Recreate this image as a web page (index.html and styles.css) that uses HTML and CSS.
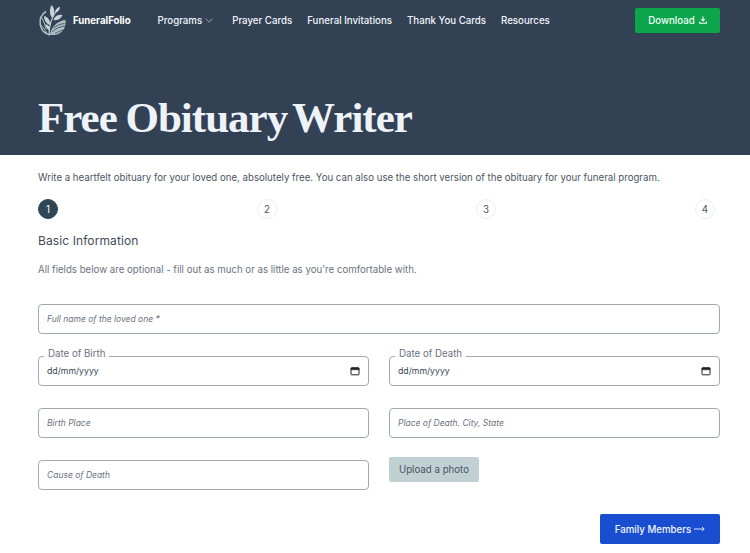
FILE: index.html
```html
<!DOCTYPE html>
<html lang="en">
<head>
<meta charset="utf-8">
<title>Free Obituary Writer</title>
<link rel="stylesheet" href="styles.css">
</head>
<body>
<header class="hero">
  <nav class="nav">
    <a class="brand">
      <svg class="logo" viewBox="0 0 28 32" width="28" height="32" aria-hidden="true">
        <path d="M8 7.500A13 13 0 0 0 12 31" fill="none" stroke="#aebfc4" stroke-width="1.500"/>
        <path d="M3 13c3 4 4 8 5 12M1.800 20c2 2 5 5 7 9" fill="none" stroke="#aebfc4" stroke-width="1"/>
        <path d="M11 31c0-9 2-17 8-25" fill="none" stroke="#c6d3d6" stroke-width="1.200"/>
        <path d="M14.500 14C11 11 11.500 5 13.500 1c3 3 4 8 1 13zM17 9c0-3 1.500-5 5-6.500 0 3-1.500 5.500-5 6.500zM12 21c-3-1-6-4-6-9 4 1 6.500 4 6 9zM15.500 16c1-3.500 4-6 9-5-1.500 3.500-4.500 6-9 5zM12 27c-2-1-4.500-3.500-4.500-7 3 1 5 3.500 4.500 7z" fill="#c6d3d6"/>
        <path d="M12 31c1-8 7-14 15.500-15 1 9-5 16-15.500 15z" fill="#aebfc4"/>
        <path d="M14 28c3-3 7-5 13-6M15.500 24c3-2 6-4 11-4.500M17 29.500c3-1.500 5.500-3 9-3.500" fill="none" stroke="#334155" stroke-width=".8"/>
      </svg>
      <span>FuneralFolio</span>
    </a>
    <ul class="links">
      <li class="programs">Programs
        <svg class="chev" viewBox="0 0 10 6" width="8" height="5" aria-hidden="true"><path d="M.7.7 5 5 9.300.7" fill="none" stroke="#9fb0c0" stroke-width="1.100"/></svg>
      </li>
      <li>Prayer Cards</li>
      <li>Funeral Invitations</li>
      <li>Thank You Cards</li>
      <li>Resources</li>
    </ul>
    <a class="download">Download
      <svg viewBox="0 0 10 10" width="8" height="8" aria-hidden="true"><path d="M5 .5v5.600M2.800 4 5 6.200 7.200 4M.8 7v2h8.400V7" fill="none" stroke="#f0fdf4" stroke-width="1.400"/></svg>
    </a>
  </nav>
  <h1><span class="first-word">Free</span> Obituary Writer</h1>
</header>
<main class="content">
  <p class="intro">Write a heartfelt obituary for your loved one, absolutely free. You can also use the short version of the obituary for your funeral program.</p>
  <ol class="steps">
    <li class="step active">1</li>
    <li class="step">2</li>
    <li class="step">3</li>
    <li class="step">4</li>
  </ol>
  <h2>Basic Information</h2>
  <p class="note">All fields below are optional - fill out as much or as little as you're comfortable with.</p>
  <form class="form">
    <input class="input wide" type="text" placeholder="Full name of the loved one *">
    <div class="date">
      <span class="float">Date of Birth</span>
      <span>dd/mm/yyyy</span>
      <svg viewBox="0 0 10 10" width="10" height="10" aria-hidden="true"><path d="M1.500 1.800h7a.5.5 0 0 1 .5.5v6a.5.5 0 0 1-.5.5h-7a.5.5 0 0 1-.5-.5v-6a.5.5 0 0 1 .5-.5z" fill="none" stroke="#222" stroke-width="1"/><path d="M1 2h8v1.800H1zM3 .8v1M7 .8v1" fill="#222" stroke="#222" stroke-width=".5"/></svg>
    </div>
    <div class="date">
      <span class="float">Date of Death</span>
      <span>dd/mm/yyyy</span>
      <svg viewBox="0 0 10 10" width="10" height="10" aria-hidden="true"><path d="M1.500 1.800h7a.5.5 0 0 1 .5.5v6a.5.5 0 0 1-.5.5h-7a.5.5 0 0 1-.5-.5v-6a.5.5 0 0 1 .5-.5z" fill="none" stroke="#222" stroke-width="1"/><path d="M1 2h8v1.800H1zM3 .8v1M7 .8v1" fill="#222" stroke="#222" stroke-width=".5"/></svg>
    </div>
    <input class="input" type="text" placeholder="Birth Place">
    <input class="input" type="text" placeholder="Place of Death. City, State">
    <input class="input" type="text" placeholder="Cause of Death">
    <div><button class="upload" type="button">Upload a photo</button></div>
  </form>
  <div class="actions">
    <button class="next" type="button">Family Members
      <svg viewBox="0 0 11 6" width="11" height="6" aria-hidden="true"><path d="M0 3h10M8 1l2.200 2L8 5" fill="none" stroke="#f1f5ff" stroke-width=".9"/></svg>
    </button>
  </div>
</main>
</body>
</html>
```
FILE: styles.css
```css
* { box-sizing: border-box; }
html, body { margin: 0; padding: 0; }
body {
  font-family: Inter, "Liberation Sans", sans-serif;
  background: #fff;
  color: #4b5563;
  overflow: hidden;
}
.hero { background: #334155; height: 155px; padding: 0 30px 0 38px; }
.nav { display: flex; align-items: center; height: 40px; }
.brand {
  display: flex; align-items: center; gap: 7px;
  color: #fff; font-size: 9.670px; font-weight: 700;
  width: 119.500px;
}
.logo { flex: none; }
.links {
  display: flex; align-items: center; gap: 15px;
  list-style: none; margin: 0; padding: 0;
  color: #f1f5f9; font-size: 9.700px; font-weight: 500;
}
.programs { display: flex; align-items: center; gap: 3px; margin-right: 4px; }
.chev { margin-top: 1px; }
.download {
  margin-left: auto;
  display: flex; align-items: center; justify-content: center; gap: 4px;
  width: 85px; height: 25px;
  background: #0ca54c; color: #f0fdf4;
  border-radius: 2px; font-size: 9.700px; font-weight: 500;
}
h1 {
  margin: 53px 0 0;
  color: #eef3f9;
  font-family: "Liberation Serif", serif;
  font-size: 43px; line-height: 50px; font-weight: 700;
  letter-spacing: -1px; word-spacing: -4px;
}
.first-word { margin-right: 3px; }
.content { padding: 0 30px 0 38px; }
.intro { margin: 0; padding-top: 16px; font-size: 9.670px; line-height: 14px; color: #4b5563; }
.steps {
  display: flex; justify-content: space-between;
  list-style: none; margin: 0; padding: 14px 5px 0 0;
}
.step {
  width: 20px; height: 20px; border-radius: 50%;
  display: flex; align-items: center; justify-content: center;
  font-size: 9.700px; color: #4b5563; border: 1px solid #eceff1; background: #fff;
}
.step.active { background: #2f4754; color: #fff; border-color: #2f4754; }
h2 { margin: 14px 0 0; font-size: 12px; line-height: 16px; font-weight: 400; color: #3f4a56; letter-spacing: .1px; }
.note { margin: 14px 0 0; font-size: 9.670px; line-height: 14px; color: #6b7280; }
.form {
  display: grid; grid-template-columns: 331px 331px; column-gap: 20px; row-gap: 22px;
  margin-top: 27px;
}
.input, .date {
  height: 30px; width: 100%;
  border: 1px solid #a3a8ae; border-radius: 4px; background: #fff;
  padding: 0 8px; font-family: inherit; font-size: 8.500px; outline: none;
}
.input::placeholder { color: #6b7280; font-style: italic; opacity: 1; }
.wide { grid-column: 1 / -1; }
.date {
  position: relative;
  display: flex; align-items: center; justify-content: space-between;
  color: #374151; padding-right: 8px; font-size: 8.700px;
}
.float {
  position: absolute; left: 5px; top: -9px;
  background: #fff; padding: 0 4px;
  font-size: 9.700px; line-height: 12px; color: #6b7280;
}
.upload {
  display: block;
  width: 90px; height: 25px; margin-top: -3px; padding: 0;
  border: 0; border-radius: 2px;
  background: #c1d0d3; color: #4b5563;
  font-family: inherit; font-size: 9.700px;
}
.actions { display: flex; justify-content: flex-end; margin-top: 24px; }
.next {
  display: flex; align-items: center; justify-content: center; gap: 3px;
  width: 120px; height: 30px; padding: 0;
  border: 0; border-radius: 2px;
  background: #1a4ed0; color: #f1f5ff;
  font-family: inherit; font-size: 9.700px; font-weight: 500;
}
```
